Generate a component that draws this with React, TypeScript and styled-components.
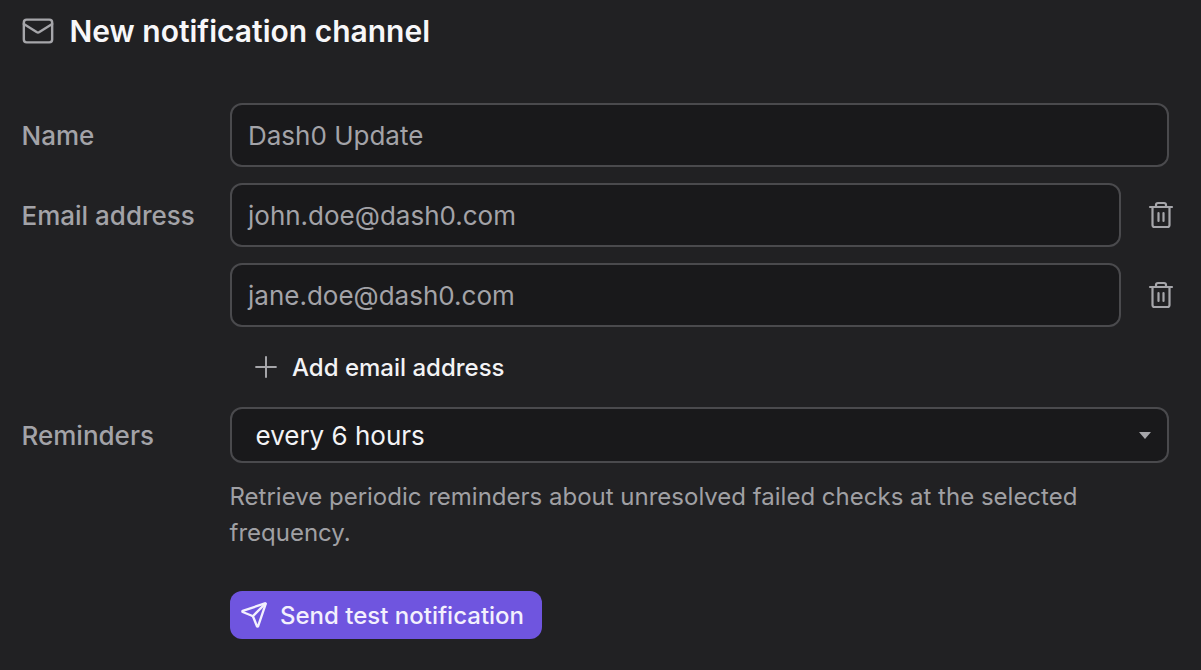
import React from 'react';
import styled, { createGlobalStyle } from 'styled-components';
import { Mail, Plus, Send } from 'lucide-react';

const GlobalStyle = createGlobalStyle`
  html, body {
    margin: 0;
    background: #212123;
    font-family: 'Inter', 'Liberation Sans', sans-serif;
  }
`;

const Page = styled.div`
  width: 1201px;
  height: 670px;
  box-sizing: border-box;
  overflow: hidden;
  padding: 11px 32px 0 22px;
  background: #212123;
`;

const Header = styled.div`
  display: flex;
  align-items: center;
  gap: 14.5px;
  height: 40px;
  margin-bottom: 52px;
  color: #a6a6aa;

  svg {
    margin-left: -1px;
  }

  h1 {
    margin: 0;
    font-size: 30px;
    font-weight: 600;
    color: #f7f7f9;
  }
`;

const Form = styled.div`
  display: grid;
  grid-template-columns: 208px 939px;
  row-gap: 16px;
`;

const Label = styled.div<{ $height: number }>`
  height: ${(p) => p.$height}px;
  margin-left: -0.5px;
  display: flex;
  align-items: center;
  font-size: 26px;
  font-weight: 500;
  color: #a3a3a8;
`;

const Column = styled.div`
  display: flex;
  flex-direction: column;
  gap: 16px;
`;

const Row = styled.div`
  display: flex;
  align-items: center;
`;

const Field = styled.div`
  flex: 1;
  height: 64px;
  box-sizing: border-box;
  display: flex;
  align-items: center;
  padding: 0 16px;
  border: 2px solid #4a4a4d;
  border-radius: 12px;
  background: #19191b;
  font-size: 26px;
  color: #a3a3a8;
`;

const IconButton = styled.button`
  width: 80px;
  margin-right: -32px;
  padding: 0;
  display: flex;
  justify-content: center;
  background: none;
  border: none;
  color: #a6a6aa;
`;

const AddButton = styled.button`
  display: flex;
  align-items: center;
  gap: 9px;
  height: 48px;
  padding: 0 0 0 19px;
  background: none;
  border: none;
  font-family: inherit;
  font-size: 24px;
  font-weight: 500;
  color: #f3f3f5;

  svg {
    color: #a6a6aa;
  }
`;

const Select = styled.div`
  position: relative;
  height: 56px;
  box-sizing: border-box;
  display: flex;
  align-items: center;
  padding: 0 23.5px;
  border: 2px solid #4a4a4d;
  border-radius: 12px;
  background: #19191b;
  font-size: 26px;
  color: #f3f3f5;

  &::after {
    content: '';
    position: absolute;
    right: 16px;
    top: 23px;
    border-left: 6px solid transparent;
    border-right: 6px solid transparent;
    border-top: 7px solid #a6a6aa;
  }
`;

const Help = styled.p`
  margin: 16px 0 0 -0.5px;
  font-size: 24px;
  line-height: 36px;
  color: #a0a0a4;
`;

const SendButton = styled.button`
  display: inline-flex;
  align-items: center;
  gap: 12px;
  align-self: flex-start;
  height: 48px;
  margin-top: 40px;
  padding: 0 18px 0 10px;
  background: #6f55df;
  border: none;
  border-radius: 12px;
  font-family: inherit;
  font-size: 24px;
  font-weight: 500;
  color: #f3f0fd;
`;

const Stack = styled.div`
  display: flex;
  flex-direction: column;
`;

const TrashIcon = () => (
  <svg width="26" height="28" viewBox="0 0 26 28" fill="none" stroke="currentColor" strokeWidth="2.2" strokeLinecap="round" strokeLinejoin="round">
    <path d="M2 6h22" />
    <path d="M8 6V4a2 2 0 0 1 2-2h6a2 2 0 0 1 2 2v2" />
    <path d="M4.5 6v18a2 2 0 0 0 2 2h13a2 2 0 0 0 2-2V6" />
    <path d="M10.5 12v8M15.5 12v8" />
  </svg>
);

export default function App() {
  return (
    <Page>
      <GlobalStyle />
      <Header>
        <Mail size={34} strokeWidth={1.7} />
        <h1>New notification channel</h1>
      </Header>
      <Form>
        <Label $height={64}>Name</Label>
        <Field>Dash0 Update</Field>

        <Label $height={64}>Email address</Label>
        <Column>
          <Row>
            <Field>john.doe@dash0.com</Field>
            <IconButton aria-label="Remove"><TrashIcon /></IconButton>
          </Row>
          <Row>
            <Field>jane.doe@dash0.com</Field>
            <IconButton aria-label="Remove"><TrashIcon /></IconButton>
          </Row>
          <AddButton>
            <Plus size={34} strokeWidth={1.4} />
            Add email address
          </AddButton>
        </Column>

        <Label $height={56}>Reminders</Label>
        <Stack>
          <Select>every 6 hours</Select>
          <Help>Retrieve periodic reminders about unresolved failed checks at the selected frequency.</Help>
          <SendButton>
            <Send size={28} strokeWidth={2} />
            Send test notification
          </SendButton>
        </Stack>
      </Form>
    </Page>
  );
}
